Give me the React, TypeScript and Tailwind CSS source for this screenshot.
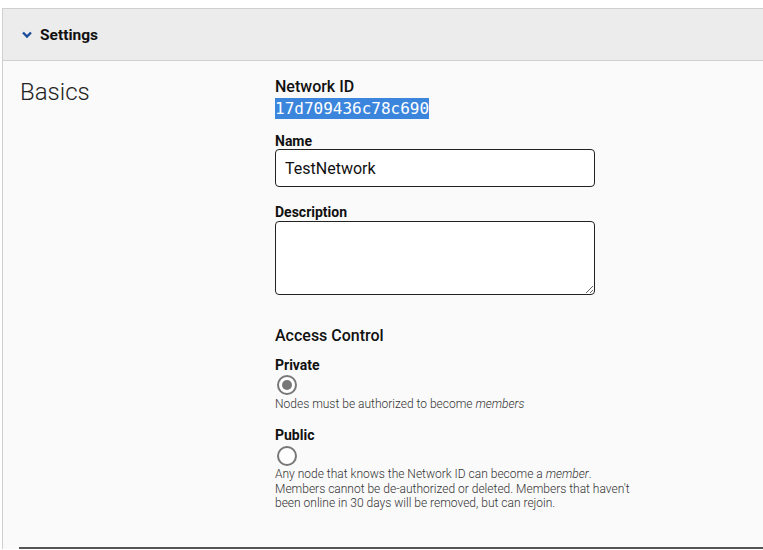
import { useState } from "react";

function Radio({ checked }: { checked: boolean }) {
  return (
    <span className="flex h-[20px] w-[20px] items-center justify-center rounded-full border-2 border-[#777] bg-white">
      {checked && <span className="h-[10px] w-[10px] rounded-full bg-[#777]" />}
    </span>
  );
}

export default function App() {
  const [name, setName] = useState("TestNetwork");
  const [access] = useState("private");

  return (
    <div className="h-[550px] w-full overflow-hidden bg-white pt-2 font-['Roboto',sans-serif] text-[#111]">
      <div className="ml-[2px] border-l border-t border-[#cfcfcf] bg-[#fafafa]">
        {/* Header */}
        <div className="flex h-[52px] items-center gap-[8px] border-b border-[#cfcfcf] bg-[#ececec] pl-[19px] pt-[3px]">
          <svg width="10" height="8" viewBox="0 0 10 8" className="mt-[-2px]">
            <path d="M1 1.5 L5 5.5 L9 1.5" fill="none" stroke="#1c4c9c" strokeWidth="2.4" />
          </svg>
          <span className="text-[15.5px] font-bold">Settings</span>
        </div>

        {/* Basics */}
        <div className="flex h-[486px]">
          <div className="w-[272px] pl-[17px] pt-[16px]">
            <h2 className="text-[24px] font-light leading-[30px] text-[#222]">Basics</h2>
          </div>
          <div className="flex w-[360px] flex-col pt-[16px]">
            <div className="text-[16px] font-medium leading-[20px]">Network ID</div>
            <div>
              <span className="bg-[#3b85dd] py-[1px] font-['DejaVu_Sans_Mono',monospace] text-[16px] leading-[19px] text-white">
                17d709436c78c690
              </span>
            </div>

            <label className="mt-[13px] text-[14px] font-bold leading-[15px]">Name</label>
            <input
              value={name}
              onChange={(e) => setName(e.target.value)}
              className="h-[38px] w-[320px] rounded-[4px] border border-[#222] bg-white px-[9px] text-[16px] text-[#111] outline-none"
            />

            <label className="mt-[17px] text-[14px] font-bold leading-[16px]">Description</label>
            <textarea className="mt-[1px] h-[74px] w-[320px] rounded-[4px] border border-[#222] bg-white px-[9px] py-[6px] text-[16px] outline-none" />

            <div className="mt-[31px] text-[16px] font-medium leading-[20px]">Access Control</div>

            <div className="mt-[11px] text-[14px] font-bold leading-[16px]">Private</div>
            <div className="ml-[2px] mt-[2px]">
              <Radio checked={access === "private"} />
            </div>
            <p className="mt-[2px] text-[12px] font-light leading-[14px] text-[#333]">
              Nodes must be authorized to become <em>members</em>
            </p>

            <div className="mt-[16px] text-[14px] font-bold leading-[16px]">Public</div>
            <div className="ml-[2px] mt-[3px]">
              <Radio checked={access === "public"} />
            </div>
            <p className="mt-[1px] text-[12px] font-light leading-[14.5px] text-[#333]">
              Any node that knows the Network ID can become a <em>member</em>. Members cannot be
              de-authorized or deleted. Members that haven't been online in 30 days will be removed,
              but can rejoin.
            </p>
          </div>
        </div>
        <div className="ml-[16px] h-[2px] bg-[#555]" />
      </div>
    </div>
  );
}
